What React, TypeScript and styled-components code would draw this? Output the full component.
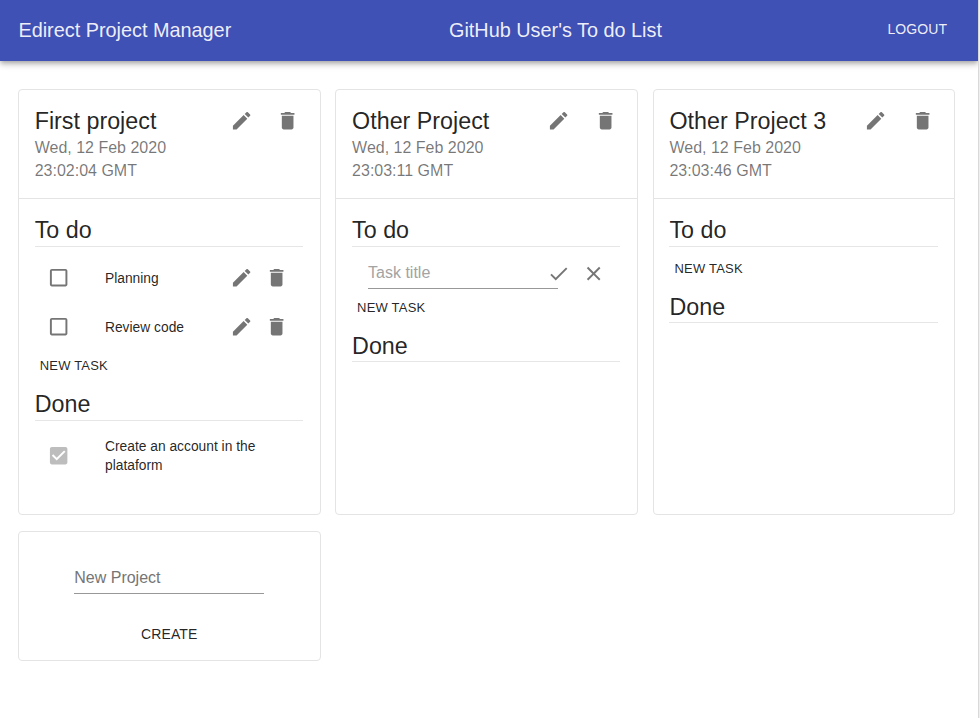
import React from "react";
import styled, { createGlobalStyle } from "styled-components";

const GlobalStyle = createGlobalStyle`
  *, *::before, *::after { box-sizing: border-box; }
  html, body { margin: 0; height: 100%; overflow: hidden; background: #fff; }
  body { font-family: "Liberation Sans", Arial, sans-serif; color: rgba(0, 0, 0, 0.87); }
  button { font-family: inherit; color: inherit; background: none; border: 0; margin: 0; padding: 0; }
`;

const Shell = styled.div`
  display: grid;
  grid-template-columns: 1fr 2px;
  height: 718px;
`;

const ScrollEdge = styled.div`
  border-left: 1px solid #d9d9d9;
  background: #efefef;
`;

const Page = styled.div`
  display: flex;
  flex-direction: column;
  min-width: 0;
  overflow: hidden;
`;

const AppBar = styled.header`
  display: flex;
  align-items: center;
  justify-content: space-between;
  flex: none;
  height: 61px;
  padding: 0 23px 0 18.4px;
  background: #3f51b5;
  color: rgba(255, 255, 255, 0.92);
  box-shadow: 0 2px 4px -1px rgba(0, 0, 0, 0.2), 0 4px 5px 0 rgba(0, 0, 0, 0.14),
    0 1px 10px 0 rgba(0, 0, 0, 0.12);
`;

const BarTitle = styled.h1`
  margin: 0;
  font-size: 19.85px;
  font-weight: 400;
  line-height: 31px;
`;

const TextButton = styled.button<{ $small?: boolean }>`
  font-size: ${(p) => (p.$small ? "13px" : "14px")};
  height: ${(p) => (p.$small ? "30px" : "35px")};
  padding: 0 ${(p) => (p.$small ? "5px" : "7.8px")};
  letter-spacing: ${(p) => (p.$small ? "0.2px" : "0.1px")};
  text-transform: uppercase;
  white-space: nowrap;
`;

const LogoutButton = styled(TextButton)`
  padding-bottom: 3px;
`;

const Board = styled.main`
  display: grid;
  grid-template-columns: repeat(3, 302.5px);
  grid-template-rows: 426px 130px;
  gap: 16px 14.9px;
  padding: 28px 0 0 18px;
`;

const Card = styled.section`
  border: 1px solid #e4e4e4;
  border-radius: 4px;
  background: #fff;
`;

const CardHeader = styled.div`
  display: flex;
  justify-content: space-between;
  height: 109px;
  padding: 15.5px 20px 0 15.7px;
  border-bottom: 1px solid #e4e4e4;
`;

const ProjectTitle = styled.h2`
  margin: 0;
  font-size: 23.3px;
  font-weight: 400;
  line-height: 31px;
`;

const ProjectDate = styled.p`
  width: 150px;
  margin: -1px 0 0;
  font-size: 16px;
  line-height: 23.2px;
  color: rgba(0, 0, 0, 0.54);
`;

const HeaderActions = styled.div`
  display: flex;
  gap: 23.4px;
  padding-top: 3.4px;
`;

const CardBody = styled.div`
  padding: 16px 16.6px 0 15.7px;
`;

const SectionTitle = styled.h3<{ $lowered?: boolean }>`
  margin: 0;
  height: 32px;
  font-size: 23.3px;
  font-weight: 400;
  line-height: ${(p) => (p.$lowered ? 32 : 30)}px;
  border-bottom: 1px solid #e6e6e6;
`;

const TaskList = styled.ul`
  margin: 0;
  padding: 6.8px 0 0;
  list-style: none;
`;

const TaskRow = styled.li<{ $tall?: boolean }>`
  display: grid;
  grid-template-columns: 70px 1fr auto;
  align-items: center;
  height: ${(p) => (p.$tall ? "55px" : "48.6px")};
  padding: 0 15px 0 0.3px;
`;

const CheckCell = styled.span<{ $disabled?: boolean }>`
  display: flex;
  padding-left: 12.4px;
  color: ${(p) => (p.$disabled ? "rgba(0, 0, 0, 0.26)" : "rgba(0, 0, 0, 0.54)")};
`;

const TaskText = styled.span`
  padding-top: 1px;
  font-size: 13.8px;
  line-height: 19px;
`;

const TaskActions = styled.div`
  display: flex;
  gap: 11.8px;
`;

const AddRow = styled.div<{ $top: number }>`
  display: flex;
  padding: ${(p) => p.$top}px 0 8px;
`;

const IconButton = styled.button`
  display: flex;
  flex: none;
  height: 23.3px;
  color: rgba(0, 0, 0, 0.54);
`;

const Svg = styled.svg`
  display: block;
  width: 23.3px;
  height: 23.3px;
  fill: currentColor;
`;

const TaskForm = styled.div`
  display: flex;
  align-items: flex-start;
  height: 45px;
  padding: 11.5px 0 0 16px;
`;

const Field = styled.input<{ $faint?: boolean }>`
  width: 190px;
  height: 30.5px;
  padding: 0;
  border: 0;
  border-bottom: 1px solid #989898;
  border-radius: 0;
  outline: 0;
  background: transparent;
  font: 16px "Liberation Sans", Arial, sans-serif;
  &::placeholder {
    opacity: 1;
    color: ${(p) => (p.$faint ? "#a3a3a3" : "#757575")};
  }
`;

const FormActions = styled.div`
  display: flex;
  gap: 11.8px;
  margin-left: -11px;
  padding-top: 3.5px;
`;

const NewProject = styled(Card)`
  display: flex;
  flex-direction: column;
  align-items: center;
  padding-top: 31.5px;
  gap: 22px;
`;

const paths = {
  edit: "M3 17.25V21h3.75L17.81 9.94l-3.75-3.75L3 17.25zM20.71 7.04c.39-.39.39-1.02 0-1.41l-2.34-2.34c-.39-.39-1.02-.39-1.41 0l-1.83 1.83 3.75 3.75 1.83-1.83z",
  trash: "M6 19c0 1.1.9 2 2 2h8c1.1 0 2-.9 2-2V7H6v12zM19 4h-3.5l-1-1h-5l-1 1H5v2h14V4z",
  box: "M19 5v14H5V5h14m0-2H5c-1.1 0-2 .9-2 2v14c0 1.1.9 2 2 2h14c1.1 0 2-.9 2-2V5c0-1.1-.9-2-2-2z",
  boxChecked:
    "M19 3H5c-1.11 0-2 .9-2 2v14c0 1.1.89 2 2 2h14c1.11 0 2-.9 2-2V5c0-1.1-.89-2-2-2zm-9 14l-5-5 1.41-1.41L10 14.17l7.59-7.59L19 8l-9 9z",
  check: "M9 16.17L4.83 12l-1.42 1.41L9 19 21 7l-1.41-1.41z",
  close:
    "M19 6.41L17.59 5 12 10.59 6.41 5 5 6.41 10.59 12 5 17.59 6.41 19 12 13.41 17.59 19 19 17.59 13.41 12z",
};

const Icon = ({ name }: { name: keyof typeof paths }) => (
  <Svg viewBox="0 0 24 24" aria-hidden="true">
    <path d={paths[name]} />
  </Svg>
);

const EditAndDelete = () => (
  <>
    <IconButton aria-label="Edit">
      <Icon name="edit" />
    </IconButton>
    <IconButton aria-label="Delete">
      <Icon name="trash" />
    </IconButton>
  </>
);

interface Project {
  title: string;
  time: string;
  todo: string[];
  done: string[];
  adding?: boolean;
}

const projects: Project[] = [
  {
    title: "First project",
    time: "23:02:04 GMT",
    todo: ["Planning", "Review code"],
    done: ["Create an account in the plataform"],
  },
  { title: "Other Project", time: "23:03:11 GMT", todo: [], done: [], adding: true },
  { title: "Other Project 3", time: "23:03:46 GMT", todo: [], done: [] },
];

const ProjectCard = ({ project }: { project: Project }) => (
  <Card>
    <CardHeader>
      <div>
        <ProjectTitle>{project.title}</ProjectTitle>
        <ProjectDate>Wed, 12 Feb 2020 {project.time}</ProjectDate>
      </div>
      <HeaderActions>
        <EditAndDelete />
      </HeaderActions>
    </CardHeader>
    <CardBody>
      <SectionTitle>To do</SectionTitle>
      {project.todo.length > 0 && (
        <TaskList>
          {project.todo.map((task) => (
            <TaskRow key={task}>
              <CheckCell>
                <Icon name="box" />
              </CheckCell>
              <TaskText>{task}</TaskText>
              <TaskActions>
                <EditAndDelete />
              </TaskActions>
            </TaskRow>
          ))}
        </TaskList>
      )}
      {project.adding && (
        <TaskForm>
          <Field $faint placeholder="Task title" />
          <FormActions>
            <IconButton aria-label="Save">
              <Icon name="check" />
            </IconButton>
            <IconButton aria-label="Cancel">
              <Icon name="close" />
            </IconButton>
          </FormActions>
        </TaskForm>
      )}
      <AddRow $top={project.todo.length || project.adding ? 0 : 6}>
        <TextButton $small>New task</TextButton>
      </AddRow>
      <SectionTitle $lowered={project.done.length === 0}>Done</SectionTitle>
      {project.done.length > 0 && (
        <TaskList>
          {project.done.map((task) => (
            <TaskRow key={task} $tall>
              <CheckCell $disabled>
                <Icon name="boxChecked" />
              </CheckCell>
              <TaskText>{task}</TaskText>
            </TaskRow>
          ))}
        </TaskList>
      )}
    </CardBody>
  </Card>
);

export default function App() {
  return (
    <>
      <GlobalStyle />
      <Shell>
        <Page>
          <AppBar>
            <BarTitle>Edirect Project Manager</BarTitle>
            <BarTitle>GitHub User's To do List</BarTitle>
            <LogoutButton>Logout</LogoutButton>
          </AppBar>
          <Board>
            {projects.map((p) => (
              <ProjectCard key={p.title} project={p} />
            ))}
            <NewProject>
              <Field placeholder="New Project" />
              <TextButton>Create</TextButton>
            </NewProject>
          </Board>
        </Page>
        <ScrollEdge />
      </Shell>
    </>
  );
}
